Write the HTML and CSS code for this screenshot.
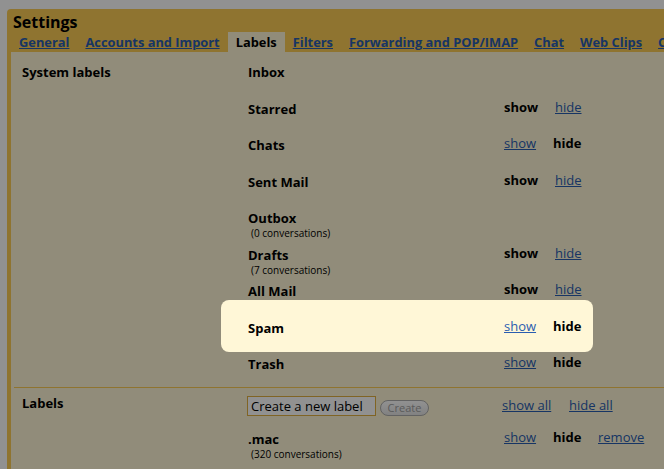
FILE: index.html
```html
<!DOCTYPE html>
<html>
<head>
<meta charset="utf-8">
<title>Settings</title>
<link rel="stylesheet" href="styles.css">
</head>
<body>
<div class="panel">
  <h1 class="title">Settings</h1>
  <nav class="tabs">
    <a class="tab" href="#">General</a>
    <a class="tab" href="#">Accounts and Import</a>
    <span class="tab active">Labels</span>
    <a class="tab" href="#">Filters</a>
    <a class="tab" href="#">Forwarding and POP/IMAP</a>
    <a class="tab" href="#">Chat</a>
    <a class="tab" href="#">Web Clips</a>
    <a class="tab" href="#">Contacts</a>
  </nav>
  <div class="content">
    <section class="sec sys">
      <div class="sec-title">System labels</div>
      <div class="rows">
        <div class="row"><div class="name">Inbox</div></div>
        <div class="row"><div class="name">Starred</div><div class="act show"><b>show</b></div><div class="act hide"><a href="#">hide</a></div></div>
        <div class="row"><div class="name">Chats</div><div class="act show"><a href="#">show</a></div><div class="act hide"><b>hide</b></div></div>
        <div class="row"><div class="name">Sent Mail</div><div class="act show"><b>show</b></div><div class="act hide"><a href="#">hide</a></div></div>
        <div class="row"><div class="name">Outbox<div class="sub">(0 conversations)</div></div></div>
        <div class="row"><div class="name">Drafts<div class="sub">(7 conversations)</div></div><div class="act show"><b>show</b></div><div class="act hide"><a href="#">hide</a></div></div>
        <div class="row"><div class="name">All Mail</div><div class="act show"><b>show</b></div><div class="act hide"><a href="#">hide</a></div></div>
        <div class="row spam"><div class="spot"></div><div class="name">Spam</div><div class="act show"><a href="#">show</a></div><div class="act hide"><b>hide</b></div></div>
        <div class="row"><div class="name">Trash</div><div class="act show"><a href="#">show</a></div><div class="act hide"><b>hide</b></div></div>
      </div>
    </section>
    <section class="sec lab">
      <div class="sec-title">Labels</div>
      <div class="rows">
        <div class="row row1">
          <div class="name create">
            <input class="newlabel" type="text" value="Create a new label">
            <button class="btn" type="button">Create</button>
          </div>
          <div class="act showall"><a href="#">show all</a></div>
          <div class="act"><a href="#">hide all</a></div>
        </div>
        <div class="row row2">
          <div class="name">.mac<div class="sub">(320 conversations)</div></div>
          <div class="act show"><a href="#">show</a></div>
          <div class="act hide"><b>hide</b></div>
          <div class="act"><a href="#">remove</a></div>
        </div>
      </div>
    </section>
  </div>
</div>
</body>
</html>
```

FILE: styles.css
```css
* { box-sizing: border-box; }
html, body { margin: 0; height: 100%; }
body {
  background: #ffffff;
  overflow: hidden;
  font-family: "Open Sans", "Noto Sans", sans-serif;
  font-size: 13px;
  color: #000;
}
a { color: #2a5db0; text-decoration: underline; }

.panel {
  margin: 9px 0 0 7px;
  width: 780px;
  background: #fbcc55;
  border-radius: 4px 4px 0 0;
}
.title {
  margin: 0;
  padding: 3px 0 0 6px;
  height: 23px;
  font-size: 16px;
  line-height: 20px;
  font-weight: 700;
}
.tabs {
  display: flex;
  white-space: nowrap;
  padding-left: 4px;
  height: 20px;
}
.tab {
  padding: 0 8px;
  line-height: 20px;
  font-size: 12.85px;
  font-weight: 700;
}
.tab.active {
  background: #fff7d7;
  color: #000;
}

.content {
  margin-left: 4px;
  background: #fff7d7;
  min-height: 480px;
}
.sec {
  display: flex;
  margin-left: 3px;
  padding-left: 8px;
}
.sec-title {
  width: 226px;
  flex: none;
  font-weight: 700;
  line-height: 18px;
  padding-top: 11px;
}
.rows { flex: 1; }
.row {
  display: flex;
  height: 36.5px;
  position: relative;
}
.name {
  width: 256px;
  flex: none;
  padding-top: 11px;
  font-weight: 700;
  line-height: 18px;
}
.sub {
  font-weight: 400;
  font-size: 10px;
  line-height: 12px;
  padding-left: 3px;
}
.act {
  padding-top: 9px;
  line-height: 18px;
}
.act b { font-weight: 700; }
.act.show { width: 49px; flex: none; }
.act.hide { width: 45px; flex: none; }
.act.hide a { margin-left: 2px; }

.spot {
  position: absolute;
  left: -27px;
  top: -8px;
  width: 372px;
  height: 52px;
  border-radius: 8px;
  box-shadow: 0 0 0 1600px rgba(0, 0, 0, 0.43);
  z-index: 5;
  pointer-events: none;
}

.lab {
  border-top: 1px solid #fbcc55;
  margin-top: 6.5px;
  padding-top: 6px;
}
.lab .sec-title { padding-top: 0; }
.row1 { height: 34px; }
.row1 .name.create {
  display: flex;
  align-items: flex-start;
  padding-top: 2px;
  font-weight: 400;
}
.newlabel {
  width: 129px;
  height: 20px;
  margin: 0 0 0 -1px;
  border: 1px solid #e2b140;
  padding: 0 3px;
  background: #ffffff;
  font-family: "Open Sans", "Noto Sans", sans-serif;
  font-size: 13px;
  color: #000;
  outline: none;
}
.btn {
  margin: 4px 0 0 4px;
  width: 49px;
  height: 16px;
  padding: 0;
  border: 1px solid #acacac;
  border-radius: 8px;
  background: linear-gradient(#ffffff, #e4e4e4);
  font-family: "Open Sans", "Noto Sans", sans-serif;
  font-size: 11px;
  line-height: 14px;
  color: #a0a0a0;
}
.row1 .act { padding-top: 2px; }
.act.showall { width: 67px; flex: none; margin-left: -2px; }
.row2 .name { padding-top: 2px; }
.row2 .act { padding-top: 0; }
```
